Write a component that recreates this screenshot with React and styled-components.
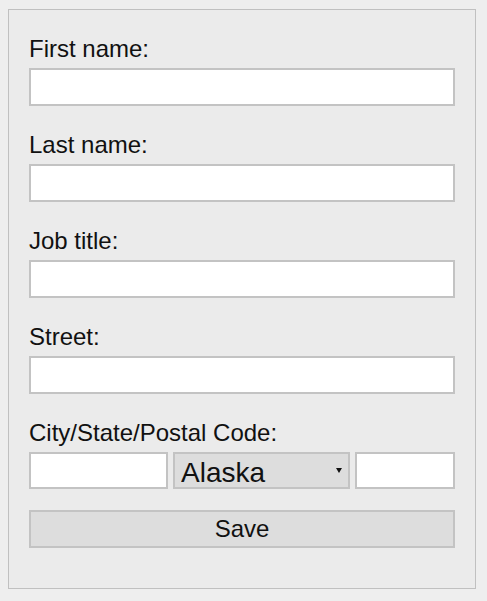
import React from 'react'
import styled, { createGlobalStyle } from 'styled-components'

const GlobalStyle = createGlobalStyle`
    body {
        margin: 0;
        background: #eeeeee;
        font-family: "Liberation Sans", Arial, sans-serif;
    }
    * {
        box-sizing: border-box;
    }
`

const Panel = styled.form`
    margin: 9px 0 0 8px;
    width: 468px;
    height: 580px;
    border: 1px solid #c0c0c0;
    background: #ebebeb;
    padding: 26px 20px 0 20px;
    display: flex;
    flex-direction: column;
`

const Field = styled.div`
    display: flex;
    flex-direction: column;
    margin-bottom: 26px;

    &:last-of-type {
        margin-bottom: 0;
    }
`

const Label = styled.label`
    font-size: 24px;
    line-height: 26px;
    color: #111;
    margin-bottom: 6px;
`

const TextInput = styled.input`
    width: ${(p) => p.$width || '100%'};
    height: ${(p) => p.$height || '38px'};
    border: 2px solid #c3c3c3;
    background: #fff;
    margin: 0;
    padding: 0 6px;
    font-family: inherit;
    font-size: 22px;
    outline: none;
`

const Row = styled.div`
    display: flex;
    gap: 5px;
`

const SelectWrap = styled.div`
    position: relative;
    width: 177px;
    height: 37px;

    &::after {
        content: '';
        position: absolute;
        right: 8px;
        top: 16px;
        border-left: 3px solid transparent;
        border-right: 3px solid transparent;
        border-top: 5px solid #111;
        pointer-events: none;
    }
`

const Select = styled.select`
    appearance: none;
    width: 100%;
    height: 100%;
    margin: 0;
    border: 2px solid #c3c3c3;
    border-radius: 0;
    background: #dddddd;
    color: #111;
    padding: 3px 0 0 6px;
    font-family: inherit;
    font-size: 28px;
    outline: none;
`

const SaveButton = styled.button`
    margin-top: 21px;
    width: 100%;
    height: 38px;
    border: 2px solid #c3c3c3;
    background: #dddddd;
    color: #111;
    font-family: inherit;
    font-size: 24px;
    padding: 0;
`

const App = () => {
    return (
        <>
            <GlobalStyle />
            <Panel onSubmit={(e) => e.preventDefault()}>
                <Field>
                    <Label>First name:</Label>
                    <TextInput type="text" />
                </Field>
                <Field>
                    <Label>Last name:</Label>
                    <TextInput type="text" />
                </Field>
                <Field>
                    <Label>Job title:</Label>
                    <TextInput type="text" />
                </Field>
                <Field>
                    <Label>Street:</Label>
                    <TextInput type="text" />
                </Field>
                <Field>
                    <Label>City/State/Postal Code:</Label>
                    <Row>
                        <TextInput type="text" $width="139px" $height="37px" />
                        <SelectWrap>
                            <Select defaultValue="AK">
                                <option value="AL">Alabama</option>
                                <option value="AK">Alaska</option>
                                <option value="AZ">Arizona</option>
                            </Select>
                        </SelectWrap>
                        <TextInput type="text" $width="100px" $height="37px" />
                    </Row>
                </Field>
                <SaveButton type="submit">Save</SaveButton>
            </Panel>
        </>
    )
}

export default App
